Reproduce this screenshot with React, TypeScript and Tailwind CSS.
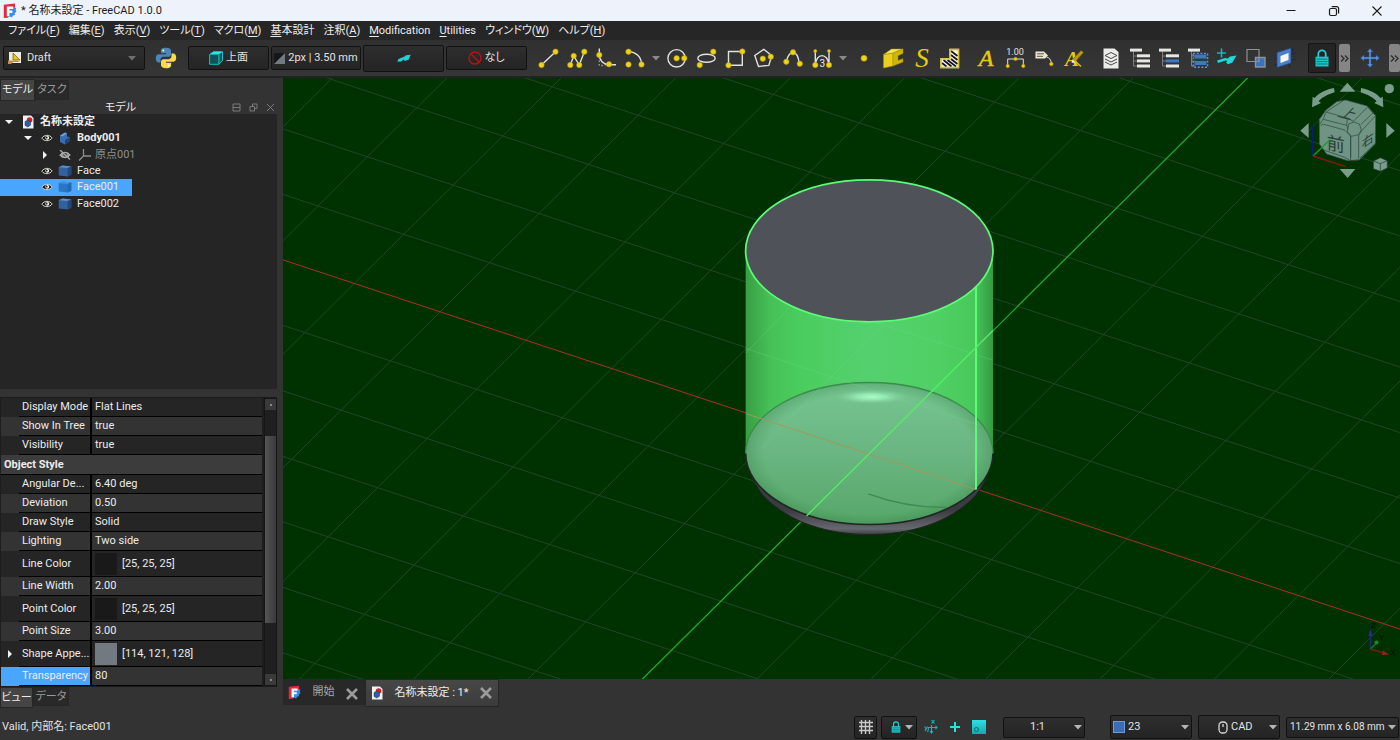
import React from 'react';

const UI = "font-[Roboto,'Noto_Sans_CJK_JP',sans-serif]";
const KANA = "[font-feature-settings:'palt']";

/* ---------- shared drawing parts ---------- */

type Pt = [number, number];

function Dots({ at, r = 2.7 }: { at: Pt[]; r?: number }) {
  return (
    <>
      {at.map(([x, y]) => (
        <circle key={`${x}-${y}`} cx={x} cy={y} r={r} fill="#edd41c" stroke="#b39b06" strokeWidth=".6" />
      ))}
    </>
  );
}

function Glyph({ children }: { children: React.ReactNode }) {
  return (
    <svg viewBox="0 0 24 24" className="size-6 shrink-0 overflow-visible" fill="none" stroke="#dfe2e0" strokeWidth="1.4" aria-hidden="true">
      {children}
    </svg>
  );
}

function Caret({ className = 'text-[#8a8a8a]' }: { className?: string }) {
  return (
    <svg viewBox="0 0 8 5" className={`h-[5px] w-2 shrink-0 ${className}`} aria-hidden="true">
      <path d="M0 0h8L4 4.5z" fill="currentColor" />
    </svg>
  );
}

function FreeCadLogo({ className }: { className: string }) {
  return (
    <svg viewBox="0 0 14 16" className={`${className} shrink-0`} aria-hidden="true">
      <path d="M.8 1.8 12 .6v3.6L10 6 5 14.8.8 15z" fill="#e3293c" />
      <path d="m6.5 5 5-.8 1.8.8-.7 2 .9 1.8-1.8 1.2.2 2-2 .4-1 2-2-.8-2 .6z" fill="#3c8be0" />
      <path d="M3.8 3.6h6.4V6H6.4v1.6h3v2.3h-3v3.3H3.8z" fill="#fff" />
    </svg>
  );
}

function DocIcon() {
  return (
    <svg viewBox="0 0 12 14" className="h-[14px] w-3 shrink-0" aria-hidden="true">
      <path d="M1 .5h8l2.5 2.5v10.5H1z" fill="#f2f2f0" />
      <circle cx="7.6" cy="5" r="2.8" fill="#d92020" />
      <path d="m3 6.5 2.5-1.3 3 1.2v3.8L5.8 12 3 10.4z" fill="#2f5fa6" stroke="#14305f" strokeWidth=".5" />
    </svg>
  );
}

function EyeIcon({ dim }: { dim?: boolean }) {
  return (
    <svg viewBox="0 0 12 10" className="h-[10px] w-3 shrink-0" aria-hidden="true">
      <path d="M.8 5.2C3 1.6 8.6 1.2 11.2 5 8.6 8.4 3.2 8.6.8 5.2z" fill={dim ? '#9a9a9a' : '#1c1c1c'} stroke={dim ? '#bdbdbd' : '#d6d6ce'} strokeWidth="1" />
      <circle cx="6.2" cy="4.8" r="2" fill={dim ? '#555' : '#f2f2ee'} />
      <circle cx="5.6" cy="4.6" r="1" fill="#222" />
      {dim && <path d="m1 0 10 9.5" stroke="#a5a5a5" strokeWidth="1.4" />}
    </svg>
  );
}

function CubeIcon({ selected }: { selected?: boolean }) {
  return (
    <svg viewBox="0 0 14 12" className="h-3 w-[14px] shrink-0" aria-hidden="true">
      <path d="M.7 2.3 4.5.6l8.8 1v8.2l-3.6 1.7-9-.9z" fill={selected ? '#2b76c4' : '#33609f'} />
      <path d="M.7 2.3 4.5.6l8.8 1-3.6 1.5z" fill={selected ? '#3f93e6' : '#5c8fd0'} />
      <path d="m9.7 3.1 3.6-1.5v8.2l-3.6 1.7z" fill={selected ? '#2368b0' : '#24477a'} />
    </svg>
  );
}

/* ---------- title and menu ---------- */

function TitleBar() {
  return (
    <header className="flex h-[21px] shrink-0 items-center bg-[#eef3fb] pl-[3px] text-[#1b1b1b]">
      <FreeCadLogo className="h-4 w-[14px]" />
      <h1 className={`${UI} ml-1 flex-1 text-[11px] leading-4`}>* 名称未設定 - FreeCAD 1.0.0</h1>
      <div className="flex items-center gap-[30px] pr-[17px]">
        <button type="button" aria-label="Minimize" className="flex size-[13px] items-center justify-center">
          <svg viewBox="0 0 12 12" className="size-3" stroke="currentColor"><path d="M1.5 5.5h9" /></svg>
        </button>
        <button type="button" aria-label="Restore" className="flex size-[13px] items-center justify-center">
          <svg viewBox="0 0 12 12" className="size-3" fill="none" stroke="currentColor" strokeWidth="1.2">
            <rect x="1.5" y="3.5" width="7" height="7" rx="1.5" />
            <path d="M3.7 1.6h4.9a2 2 0 0 1 2 2v4.8" />
          </svg>
        </button>
        <button type="button" aria-label="Close" className="flex size-[13px] items-center justify-center">
          <svg viewBox="0 0 12 12" className="size-3" stroke="currentColor" strokeWidth="1.1"><path d="m1.5 1.5 9 9m0-9-9 9" /></svg>
        </button>
      </div>
    </header>
  );
}

const MENUS: { pre: string; key: string; post: string }[] = [
  { pre: 'ファイル(', key: 'F', post: ')' },
  { pre: '編集(', key: 'E', post: ')' },
  { pre: '表示(', key: 'V', post: ')' },
  { pre: 'ツール(', key: 'T', post: ')' },
  { pre: 'マクロ(', key: 'M', post: ')' },
  { pre: '', key: '基', post: '本設計' },
  { pre: '注釈(', key: 'A', post: ')' },
  { pre: '', key: 'M', post: 'odification' },
  { pre: '', key: 'U', post: 'tilities' },
  { pre: 'ウィンドウ(', key: 'W', post: ')' },
  { pre: 'ヘルプ(', key: 'H', post: ')' },
];

function MenuBar() {
  return (
    <nav className={`${UI} ${KANA} flex h-[19px] shrink-0 items-center gap-[9px] bg-[#262626] pl-2 text-[11px] leading-4 text-[#ececec]`}>
      {MENUS.map((m) => (
        <button key={m.pre + m.key + m.post} type="button" className="whitespace-nowrap">
          {m.pre}<span className="underline underline-offset-2">{m.key}</span>{m.post}
        </button>
      ))}
    </nav>
  );
}

/* ---------- toolbar ---------- */

function Tool({ name, children }: { name: string; children: React.ReactNode }) {
  return (
    <button type="button" aria-label={name} className="flex h-7 w-[29px] shrink-0 items-center justify-center">
      <Glyph>{children}</Glyph>
    </button>
  );
}

function More({ name }: { name: string }) {
  return (
    <button type="button" aria-label={name} className="flex h-7 w-[13px] shrink-0 items-center justify-center">
      <Caret />
    </button>
  );
}

function Extend({ name }: { name: string }) {
  return (
    <button type="button" aria-label={name} className="flex h-7 w-[11px] shrink-0 items-center justify-center rounded-[2px] bg-[#858585]">
      <svg viewBox="0 0 9 7" className="h-[7px] w-[9px]" fill="none" stroke="#2c2c2c" strokeWidth="1.3"><path d="m1 .5 3 3-3 3m4-6 3 3-3 3" /></svg>
    </button>
  );
}

const FIELD = 'flex items-center rounded-[2px] border border-[#111] bg-linear-to-b from-[#2e2e2e] to-[#242424] text-[#e2e2e2]';

function Padlock({ className }: { className: string }) {
  return (
    <svg viewBox="0 0 14 18" className={`${className} shrink-0`} aria-hidden="true">
      <path d="M3.3 8V5a3.7 3.7 0 0 1 7.4 0v3" fill="none" stroke="#20d3d8" strokeWidth="1.7" />
      <path d="M.5 7.6h13v9.9H.5z" fill="#1fc4c9" />
      <path d="M1.5 10.2h11M1.5 12.6h11M1.5 15h11" stroke="#0b7377" strokeWidth=".9" />
    </svg>
  );
}

function ListBars({ accent }: { accent: 'none' | 'mid' | 'select' }) {
  return (
    <>
      <path d="M5.5 5v15M5.5 10h4m-4 5h4m-4 5h4" stroke="#8e918e" strokeWidth=".8" />
      <path d="M2 2.6h12v3H2z" fill="#e6e8e4" stroke="none" />
      {accent !== 'select' && (
        <g stroke="none">
          <path d="M9 8.3h13v3H9z" fill="#e6e8e4" />
          <path d="M9 13.4h13v3H9z" fill={accent === 'mid' ? '#3f77c4' : '#e6e8e4'} />
          <path d="M9 18.5h13v3H9z" fill="#e6e8e4" />
        </g>
      )}
      {accent === 'select' && (
        <g>
          <path d="M8.5 8.5h12v4h-12zm0 6.500h12v4h-12z" fill="#3f77c4" stroke="none" />
          <path d="M7.2 7.4h14.4v13.8H7.2z" stroke="#5a94e2" strokeDasharray="2 1.6" />
          <path d="M7 13.7h15" stroke="#1b3d70" />
        </g>
      )}
    </>
  );
}

function ToolBar() {
  return (
    <div className={`${UI} flex h-[38px] shrink-0 items-center border-b-2 border-[#222] bg-linear-to-b from-[#303030] to-[#363636] pl-[3px] text-[11px] leading-4`}>
      <div className={`${FIELD} h-6 w-[142px] shrink-0 pr-2 pl-1`}>
        <svg viewBox="0 0 14 14" className="size-[14px] shrink-0" aria-hidden="true">
          <path d="M1 1h12v11H1z" fill="#eeece4" />
          <path d="M5 2v7h7z" fill="#e8c70f" stroke="#6d5a00" strokeWidth=".7" />
          <path d="M0 9.5h9l3 1.6H5L3 13H0z" fill="#c58c42" />
        </svg>
        <select aria-label="Workbench" className="ml-[5px] flex-1 appearance-none bg-transparent outline-none"><option>Draft</option></select>
        <Caret className="text-[#6f6f6f]" />
      </div>
      <button type="button" aria-label="Python" className="mr-[10px] ml-[9px] flex h-6 w-6 shrink-0 items-center justify-center">
        <svg viewBox="0 0 22 22" className="size-[22px]" aria-hidden="true">
          <path d="M10.8.8c-4 0-4.900 1.500-4.900 3.200v2.300h5.200v.9H3.900C2.100 7.200.8 8.600.8 11.200s1.100 4.200 2.700 4.200h2v-2.700c0-1.700 1.400-2.900 3-2.900h5c1.400 0 2.500-1.200 2.500-2.600V4c0-2-1.700-3.200-5.200-3.200z" fill="#4a86b8" />
          <path d="M11.2 21.200c4 0 4.900-1.500 4.900-3.200v-2.300h-5.200v-.9h7.200c1.800 0 3.100-1.400 3.100-4s-1.100-4.200-2.700-4.200h-2v2.700c0 1.700-1.400 2.900-3 2.900h-5C7.100 12.200 6 13.400 6 14.800V18c0 2 1.700 3.200 5.200 3.200z" fill="#ffd94a" />
          <circle cx="8.3" cy="3.5" r="1" fill="#fff" />
          <circle cx="13.7" cy="18.5" r="1" fill="#fff" />
        </svg>
      </button>
      <div className="flex shrink-0 items-center gap-[2px]">
        <button type="button" className={`${FIELD} h-6 w-[81px] justify-center gap-[3px]`}>
          <svg viewBox="0 0 14 14" className="size-[14px]" aria-hidden="true">
            <path d="M.6 3.5 4.5.7h9v8.8l-3.6 3.8H.6z" fill="#0d5558" stroke="#22c9cf" strokeWidth=".9" />
            <path d="M.6 3.5 4.5.7h9L9.9 3.5z" fill="#2fe3e8" />
            <path d="M9.9 3.5v9.8" stroke="#22c9cf" />
          </svg>
          上面
        </button>
        <button type="button" className={`${FIELD} h-6 w-[90px] justify-center gap-[3px] whitespace-nowrap`}>
          <svg viewBox="0 0 11 11" className="size-[11px] shrink-0" aria-hidden="true"><path d="M0 0h11v11H0z" fill="#15171a" /><path d="M11 0v11H0z" fill="#727980" /></svg>
          2px | 3.50 mm
        </button>
        <button type="button" aria-label="Construction mode" className={`${FIELD} h-[27px] w-[81px] justify-center`}>
          <svg viewBox="0 0 14 9" className="h-[9px] w-[14px]" aria-hidden="true"><path d="M.3 7.500 1.500 5l6-2.500L9 1.300l4.800-.5-2.300 5L7.500 7 7 5.500 3.500 7.800z" fill="#22cfd4" /></svg>
        </button>
        <button type="button" className={`${FIELD} ${KANA} h-6 w-[81px] justify-center gap-[2px]`}>
          <svg viewBox="0 0 14 14" className="size-[14px]" fill="none" stroke="#c01010" strokeWidth="1.3" aria-hidden="true"><circle cx="7" cy="7" r="6" /><path d="m2.8 2.8 8.4 8.4" /></svg>
          なし
        </button>
      </div>

      <div className="ml-[6px] flex shrink-0 items-center">
        <Tool name="Line"><path d="M5.5 19 19.5 5.7" /><Dots at={[[5.5, 19], [19.5, 5.7]]} /></Tool>
        <Tool name="Polyline"><path d="m5.3 19 3.4-9 5.600 9 5-13.300" /><Dots at={[[5.3, 19], [8.7, 10], [14.3, 19], [19.3, 5.7]]} /></Tool>
        <Tool name="Fillet"><path d="M5.3 2.500V9c0 5 4 9.500 9.700 9.800h7" /><path d="M5.3 14.500v5h6" stroke="#9a9d9a" strokeDasharray="1.5 2" /><Dots at={[[5.3, 9], [15, 18.3]]} /></Tool>
        <Tool name="Arc"><path d="M5.5 5.700c7.500 0 13 5.300 13 12.800" /><Dots at={[[5.5, 5.7], [5.5, 18.5], [18.5, 18.5]]} /></Tool>
        <More name="Arc tools" />
        <Tool name="Circle"><circle cx="11.6" cy="12.3" r="8.7" /><Dots at={[[11.6, 12.3], [19.3, 12.3]]} /></Tool>
        <Tool name="Ellipse"><ellipse cx="12.5" cy="12.3" rx="8.7" ry="4" /><Dots at={[[5.7, 19], [19.3, 5.7]]} /></Tool>
        <Tool name="Rectangle"><path d="M5.5 5.500h13.800v13.800H5.500z" /><Dots at={[[5.5, 19.3], [19.3, 5.5]]} /></Tool>
        <Tool name="Polygon"><path d="m11.800 3.300 8 6.400-3 9.700-10.300 1L2.800 9.500z" /><Dots at={[[10.8, 12.7], [18.8, 10.7]]} /></Tool>
        <Tool name="B-spline"><path d="M5.300 15.700C6.500 10.500 8.500 6.500 12 6.500s5.500 5 6.300 11" /><Dots at={[[5.3, 15.7], [12, 6.3], [18.8, 17.7]]} /></Tool>
        <Tool name="Bézier curve">
          <path d="M5.300 5v14m13.700 0V5M5.300 19C6 6.500 18 6.500 19 19" />
          <text x="12.3" y="21" fontSize="10" textAnchor="middle" fill="#e8e8e8" stroke="none">3</text>
          <Dots at={[[5.3, 19], [19, 19]]} /><Dots at={[[5.3, 5], [19, 5]]} r={1.6} />
        </Tool>
        <More name="Bézier tools" />
        <Tool name="Point"><Dots at={[[12, 12.3]]} r={3} /></Tool>
        <Tool name="Facebinder">
          <g stroke="#a38e05" strokeWidth=".5">
            <path d="M2.500 8.500 12 7v13l-9.500 2z" fill="#ead01a" />
            <path d="m2.500 8.500 8-5.500H22l-10 4z" fill="#f7e65c" />
            <path d="m12 7 10-4v4.500l-5 2.300v4.700l5-1.800V16l-10 4z" fill="#cfb40c" />
          </g>
        </Tool>
        <Tool name="ShapeString"><text x="12" y="21" fontSize="27" textAnchor="middle" fill="#e6cb14" stroke="none" className="font-['Liberation_Serif',serif] italic">S</text></Tool>
        <Tool name="Hatch">
          <path d="M11 3.500h8.500v18H2v-8.700h9z" fill="#f4f4f4" />
          <path d="m12 5 6.500 5M12 9l6.500 5M12 13l6.500 5M8.500 14l8.500 6.500M4.500 14l8 6.500M3 17l4.500 3.500" stroke="#161616" strokeWidth="1.7" />
          <path d="M11 3.500h8.500v18H2v-8.700h9z" stroke="#dcc216" strokeWidth="1.3" />
        </Tool>
      </div>

      <div className="ml-[6px] flex shrink-0 items-center">
        <Tool name="Text"><text x="12" y="20" fontSize="24" textAnchor="middle" fill="#e6cb14" stroke="#e6cb14" strokeWidth=".5" className="font-['Liberation_Serif',serif] italic">A</text></Tool>
        <Tool name="Dimension">
          <text x="12" y="9" fontSize="9" textAnchor="middle" fill="#e0e0e0" stroke="none">1.00</text>
          <path d="M4.700 20v-7h15.600v7" strokeWidth="1" /><Dots at={[[4.7, 20], [20.3, 20], [12.5, 12.9]]} r={1.7} />
        </Tool>
        <Tool name="Label">
          <path d="M3.500 5.500H12l4 4-3 3H3.500z" fill="#ece6d2" stroke="none" /><path d="M5 7.800h7M5 10.300h6" stroke="#4a463a" strokeWidth=".9" />
          <path d="M14.500 11c3 .5 4.500 3 4.800 6" strokeWidth="1" /><Dots at={[[19.3, 18]]} r={1.8} />
        </Tool>
        <Tool name="Annotation styles">
          <text x="11" y="20" fontSize="21" fontWeight="700" textAnchor="middle" fill="#e6cb14" stroke="none" className="font-['Liberation_Serif',serif] italic">A</text>
          <path d="m11 14 9-9.500 2.500 2L14 16" fill="#b99a10" stroke="#6e5b05" strokeWidth=".6" /><path d="m10.500 17 1-3.500 3 2.700z" fill="#f3f3f3" stroke="none" /><path d="m14 15 6 5.500" stroke="#d8be12" strokeWidth="1.6" />
        </Tool>
      </div>

      <div className="ml-[9px] flex shrink-0 items-center">
        <Tool name="Layer">
          <path d="M4.500 2.500h11L19.500 6v16.500h-15z" fill="#ecece8" stroke="none" />
          <path d="m6 9.500 6-3 6 3-6 3zM6 13l6 3 6-3M6 16l6 3 6-3" stroke="#474a47" strokeWidth="1" />
        </Tool>
        <Tool name="Layer manager"><ListBars accent="none" /></Tool>
        <Tool name="Add to layer"><ListBars accent="mid" /></Tool>
        <Tool name="Select group"><ListBars accent="select" /></Tool>
        <Tool name="Add to construction group">
          <path d="M2 7h9M6.500 2.500v9" stroke="#1fb3b8" strokeWidth="1.6" />
          <path d="m2 14.500 8-2.500 3 .5 2-2 6.500-1-4 7-4.500 1.800-2-1.800 1.500-1.500-2-.5-7.500 2.500z" fill="#26d4d9" stroke="none" />
        </Tool>
        <Tool name="Toggle display mode">
          <path d="M11.500 11.500h9.500v9.500h-9.500z" fill="#3a72be" stroke="#8e9296" /><path d="M3 3.500h12v12H3z" stroke="#8e9296" strokeWidth="1.2" />
        </Tool>
        <Tool name="Working plane proxy">
          <path d="M1 13l22-6M1 19l22-6M7 22l3-20m6 20 4-20" stroke="#16263f" strokeWidth=".8" />
          <path d="M4 6.500 18 2v15L4 21.500z" fill="#4b80c8" stroke="#23487f" strokeWidth=".8" />
          <path d="m7.500 10 8-3v7l-8 3z" fill="#f3f5f7" stroke="none" />
        </Tool>
      </div>

      <div className="ml-[9px] flex flex-1 items-center">
        <button type="button" aria-label="Snap lock" aria-pressed="true" className="flex h-[30px] w-7 shrink-0 items-center justify-center rounded-[2px] border border-[#141414] bg-[#242424]">
          <Padlock className="h-[18px] w-[14px]" />
        </button>
        <div className="ml-[3px] flex"><Extend name="More snap tools" /></div>
        <button type="button" aria-label="Move" className="mx-[7px] flex h-7 w-[25px] shrink-0 items-center justify-center">
          <svg viewBox="0 0 20 20" className="size-5" aria-hidden="true">
            <path d="m10 .5 3 3.500h-2v5h5V7l3.500 3-3.500 3v-2h-5v5h2l-3 3.500L7 16h2v-5H4v2L.5 10 4 7v2h5V4H7z" fill="#5a8fdc" stroke="#2a4f8c" strokeWidth=".5" />
          </svg>
        </button>
        <div className="ml-auto flex pr-[3px]"><Extend name="More modify tools" /></div>
      </div>
    </div>
  );
}

/* ---------- model panel ---------- */

function Arrow({ open }: { open: boolean }) {
  return (
    <svg viewBox="0 0 8 8" className="size-2 shrink-0" aria-hidden="true">
      <path d={open ? 'M0 2h8L4 6z' : 'M2 0v8l4-4z'} fill="#f2f2f2" />
    </svg>
  );
}

function ModelTree() {
  const row = 'flex items-center whitespace-nowrap';
  return (
    <ul className="grid h-[98px] auto-rows-fr">
      <li className={`${row} pl-[5px] font-bold`}><Arrow open /><span className="mr-[6px] ml-[9px] flex"><DocIcon /></span>名称未設定</li>
      <li className={`${row} pl-6 font-bold`}>
        <Arrow open /><span className="mr-[6px] ml-[9px] flex"><EyeIcon /></span>
        <svg viewBox="0 0 12 13" className="mr-[6px] h-[13px] w-3 shrink-0" aria-hidden="true">
          <path d="m1 3.500 5-3 2 1v3l3 .5v4l-5 3.500L1 10z" fill="#3a6cb0" /><path d="m6 12.500 5-3.500V5L6 8z" fill="#20447c" /><path d="m1 3.500 5-3 2 1-4.500 3z" fill="#6d9ddb" />
        </svg>
        Body001
      </li>
      <li className={`${row} pl-[41px] text-[#8d8d8d]`}>
        <Arrow open={false} /><span className="mr-[7px] ml-[10px] flex"><EyeIcon dim /></span>
        <svg viewBox="0 0 13 12" className="mr-1 h-3 w-[13px] shrink-0" fill="none" stroke="#8d8d8d" strokeWidth="1.3" aria-hidden="true"><path d="M5.500 0v7L1 11.500M5.500 7H13" /></svg>
        原点001
      </li>
      {['Face', 'Face001', 'Face002'].map((name) => (
        <li key={name} className={name === 'Face001' ? `${row} w-[132px] bg-[#4aa5ff] pl-[41px]` : `${row} pl-[41px]`}>
          <EyeIcon /><span className="mr-[5px] ml-[5px] flex"><CubeIcon selected={name === 'Face001'} /></span>{name}
        </li>
      ))}
    </ul>
  );
}

type Prop = { name: string; value: string; swatch?: 'dark' | 'grey'; group?: boolean; expand?: boolean; current?: boolean };

const PROPS: Prop[] = [
  { name: 'Display Mode', value: 'Flat Lines' },
  { name: 'Show In Tree', value: 'true' },
  { name: 'Visibility', value: 'true' },
  { name: 'Object Style', value: '', group: true },
  { name: 'Angular De...', value: '6.40 deg' },
  { name: 'Deviation', value: '0.50' },
  { name: 'Draw Style', value: 'Solid' },
  { name: 'Lighting', value: 'Two side' },
  { name: 'Line Color', value: '[25, 25, 25]', swatch: 'dark' },
  { name: 'Line Width', value: '2.00' },
  { name: 'Point Color', value: '[25, 25, 25]', swatch: 'dark' },
  { name: 'Point Size', value: '3.00' },
  { name: 'Shape Appe...', value: '[114, 121, 128]', swatch: 'grey', expand: true },
  { name: 'Transparency', value: '80', current: true },
];

function PropertyTable() {
  return (
    <table className="w-full table-fixed border-separate border-spacing-0 text-left">
      <colgroup><col className="w-[18px]" /><col className="w-[73px]" /><col /></colgroup>
      <tbody>
        {PROPS.map((p, i) => {
          if (p.group) {
            return (
              <tr key={p.name} className="h-5 bg-[#3c3c3c]">
                <th colSpan={3} className="border-b border-black p-0 pl-[3px] font-bold">{p.name}</th>
              </tr>
            );
          }
          const odd = i % 2 === 1;
          return (
            <tr key={p.name} className={`${p.swatch ? 'h-[26px]' : 'h-[19px]'} ${odd ? 'bg-[#333]' : 'bg-[#252525]'}`}>
              <td className={`p-0 pl-[5px] ${p.current ? 'bg-[#4aa5ff]' : ''}`}>{p.expand && <Arrow open={false} />}</td>
              <th className={`border-r-2 border-b border-black p-0 pl-[3px] font-normal whitespace-nowrap ${p.current ? 'bg-[#4aa5ff]' : ''}`}>{p.name}</th>
              <td className="border-b border-black p-0 pl-[3px]">
                <span className="flex items-center gap-[5px]">
                  {p.swatch && <span className={`block size-[22px] ${p.swatch === 'dark' ? 'bg-[#191919]' : 'bg-[#727980]'}`} />}
                  {p.value}
                </span>
              </td>
            </tr>
          );
        })}
      </tbody>
    </table>
  );
}

const TAB = 'flex items-center justify-center border border-[#262626]';

function SidePanel() {
  return (
    <aside className={`${UI} flex w-[283px] shrink-0 flex-col bg-[#333] text-[11px] leading-4 text-[#ececec]`}>
      <div role="tablist" className={`${KANA} flex shrink-0 items-start pt-px`}>
        <button type="button" role="tab" aria-selected="true" className={`${TAB} h-[22px] w-[35px] bg-[#454545]`}>モデル</button>
        <button type="button" role="tab" aria-selected="false" className={`${TAB} mt-px h-[20px] w-[34px] bg-[#292929] text-[#9a9a9a]`}>タスク</button>
      </div>
      <div className={`${KANA} flex h-[13px] shrink-0 items-center pr-2 pl-[105px]`}>
        <h2 className="flex-1">モデル</h2>
        <div className="flex gap-2 text-[#7b7b7b]">
          {[
            { n: 'Collapse', d: 'M1 1h7v7H1zM1 4.5h7' },
            { n: 'Float', d: 'M1 3.5h4.5V8H1zM3.500 3V1H8v4.500H6' },
            { n: 'Close panel', d: 'm1 1 7 7m0-7L1 8' },
          ].map((b) => (
            <button key={b.n} type="button" aria-label={b.n}>
              <svg viewBox="0 0 9 9" className="size-[9px]" fill="none" stroke="currentColor"><path d={b.d} /></svg>
            </button>
          ))}
        </div>
      </div>
      <div className="mr-[6px] min-h-0 flex-1 bg-[#252525]">
        <ModelTree />
      </div>
      <div className="mt-2 mr-[6px] flex shrink-0 border-t border-b border-[#1c1c1c] bg-[#1d1d1d] pl-px">
        <div className="min-w-0 flex-1"><PropertyTable /></div>
        <div className="ml-[2px] flex w-[13px] flex-col border border-[#151515] bg-[#1f1f1f]">
          <button type="button" aria-label="Scroll up" className="flex h-[11px] items-center justify-center bg-[#3a3a3a]"><span className="size-[2px] bg-[#888]" /></button>
          <div className="mt-[26px] h-[187px] bg-linear-to-r from-[#555] to-[#3a3a3a]" />
          <button type="button" aria-label="Scroll down" className="mt-auto flex h-[11px] items-center justify-center bg-[#3a3a3a]"><span className="size-[2px] bg-[#888]" /></button>
        </div>
      </div>
      <div role="tablist" className={`${KANA} flex shrink-0 items-start pb-px`}>
        <button type="button" role="tab" aria-selected="true" className={`${TAB} h-[21px] w-[33px] bg-[#454545]`}>ビュー</button>
        <button type="button" role="tab" aria-selected="false" className={`${TAB} h-[19px] w-[36px] bg-[#292929] text-[#9a9a9a]`}>データ</button>
      </div>
    </aside>
  );
}

/* ---------- 3D view ---------- */

const STEPS = Array.from({ length: 23 }, (_, i) => i - 11).filter((k) => k !== 0);

function Scene() {
  return (
    <svg viewBox="283 78 1117 602" preserveAspectRatio="xMidYMid slice" className="absolute inset-0 size-full" role="img" aria-label="3D view">
      <defs>
        <linearGradient id="wall">
          <stop offset="0" stopColor="#389e44" /><stop offset=".1" stopColor="#46c157" /><stop offset=".22" stopColor="#4acd5e" />
          <stop offset=".5" stopColor="#55d06f" /><stop offset=".78" stopColor="#4fd064" /><stop offset=".92" stopColor="#49c95b" /><stop offset="1" stopColor="#359a42" />
        </linearGradient>
        <linearGradient id="dome" x2="0" y2="1">
          <stop offset="0" stopColor="#76c692" /><stop offset=".5" stopColor="#6ab581" /><stop offset="1" stopColor="#56a769" />
        </linearGradient>
        <radialGradient id="rim"><stop offset=".85" stopColor="#2f7a3d" stopOpacity="0" /><stop offset="1" stopColor="#2f7a3d" stopOpacity=".3" /></radialGradient>
        <linearGradient id="base" x2="0" y2="1"><stop offset=".7" stopColor="#3b3c42" /><stop offset=".93" stopColor="#66686f" /><stop offset="1" stopColor="#3c3d42" /></linearGradient>
        <radialGradient id="shine"><stop offset="0" stopColor="#a9ffc6" /><stop offset=".4" stopColor="#9bf0b8" stopOpacity=".8" /><stop offset="1" stopColor="#7fd09b" stopOpacity="0" /></radialGradient>
      </defs>
      <path d="M283 78h1117v602H283z" fill="#003100" />
      <g stroke="#21452a" strokeWidth="1">
        {STEPS.map((k) => <line key={`a${k}`} x1="283" y1={260.4 + 65.5 * k} x2="1400" y2={629.6 + 65.5 * k} />)}
        {STEPS.map((k) => <line key={`b${k}`} x1={1248 + 114.4 * k} y1="78" x2={642 + 114.4 * k} y2="680" />)}
      </g>
      <path d="M1248 78 642 680" stroke="#25b02c" strokeWidth="1.2" />
      <path d="m283 260.4 1117 369.2" stroke="#a93226" />
      <g transform="translate(730 170) scale(.33333)">
        <path d="M47 852c0 30 12 72 52 126 80 84 200 117 319 117s240-33 319-117c40-54 52-96 52-126z" fill="url(#base)" stroke="#222" strokeWidth="3" />
        <path d="M47 244v608a371 213 0 0 0 742 0V244z" fill="url(#wall)" />
        <ellipse cx="418" cy="852" rx="371" ry="213" fill="url(#dome)" />
        <ellipse cx="418" cy="852" rx="371" ry="213" fill="url(#rim)" />
        <ellipse cx="425" cy="682" rx="112" ry="22" fill="url(#shine)" />
        <path d="M47 852a371 213 0 0 1 742 0" fill="none" stroke="#3c8b4d" strokeWidth="4" />
        <path d="M47 852a371 213 0 0 0 742 0" fill="none" stroke="#1f2722" strokeWidth="5" />
        <g fill="none" strokeWidth="2.5">
          <path d="m47 550 45-45 80-85M92 840 300 625l170-165M47 537l700 230M440 460l349 112" stroke="#6cd883" strokeOpacity=".4" />
          <path d="m50 733 688 227" stroke="#a1995a" strokeWidth="3" />
          <path d="M415 973c70 26 150 42 235 41" stroke="#3f8a52" strokeWidth="4.5" />
        </g>
        <path d="M738 348v612" stroke="#5dfb78" strokeWidth="6" />
      </g>
      <path d="M993 331 806.5 516.5" stroke="#55ee66" strokeWidth="1.3" />
      <ellipse cx="869.3" cy="251.3" rx="123.7" ry="71" fill="#4f5359" stroke="#5dfb78" strokeWidth="1.7" />
    </svg>
  );
}

function NavCube() {
  return (
    <svg viewBox="660 234 300 336" className="absolute top-0 right-0 h-28 w-[100px]" role="img" aria-label="Navigation cube">
      <g fill="#7a9c8c">
        <path d="m779 275 23-27 24 27zM779 507h47l-23 27zM686 369v45l-25-22zM919 369v45l25-22z" />
        <circle cx="928" cy="266" r="14" />
        <path d="M762 264c-30 6-48 18-58 30l-6-4-2 32 27-13-7-5c8-10 24-20 48-27zM843 264c28 6 50 18 58 30l7-4 2 32-27-13 7-5c-10-10-24-20-48-27z" />
        <path d="m880 483 21-10 21 9v22l-21 10-21-8z" stroke="#20382a" strokeWidth="2" />
        <path d="m880 483 21 8 21-9M901 491v22" fill="none" stroke="#20382a" strokeWidth="2" />
      </g>
      <path d="M698 377v90" stroke="#0a1a80" strokeWidth="4" />
      <path d="m770 305 27-5 65 18 25 29-1 85-48 48-35 2-63-20-22-30v-74l20-28z" fill="#6f9484" stroke="#3a4f45" strokeWidth="2" />
      <g fill="none" stroke="#2b4438" strokeWidth="2">
        <path d="m738 336 64 18 18 10 42-42M738 336l-8 20-10 16M730 358l70 18 4 12M728 372l66 18 18 18v64M722 378l6-6M802 354l-2 22M720 446l74 26 18 10 24-2" />
        <path d="m806 372 16-6 16 6 6 18-8 14-22 5-12-14z" />
        <path d="m842 374 40-38M862 320l22 24M845 392l41-44M836 406v70M836 406l9-14M812 408v72M886 430l-46 44M738 336l52-34" />
      </g>
      <g fill="#2b3f36" className="font-['Noto_Sans_CJK_JP',sans-serif]">
        <text transform="translate(792 354) rotate(14) skewX(-30)" fontSize="44" textAnchor="middle">上</text>
        <text transform="translate(767 452) skewY(12)" fontSize="54" textAnchor="middle">前</text>
        <text transform="translate(863 434) skewY(-34)" fontSize="36" textAnchor="middle">右</text>
      </g>
      <path d="m699 468 50-48" stroke="#1f9a2a" strokeWidth="4" />
      <path d="m699 468 98 32" stroke="#8e1512" strokeWidth="4" />
    </svg>
  );
}

function AxisCross() {
  return (
    <svg viewBox="1360 618 40 44" className="absolute right-0 bottom-[18px] h-11 w-10" role="img" aria-label="Axis cross">
      <path d="M1370.5 650v-14" stroke="#23237e" strokeWidth="1.5" /><path d="m1368.3 637 2.2-7 2.2 7z" fill="#2a2a9a" />
      <path d="m1370.5 650 5-5" stroke="#1c7a1c" strokeWidth="1.5" /><circle cx="1376.5" cy="643.5" r="2" fill="#1f8a1f" />
      <path d="m1370.5 650 13 4" stroke="#7a1a1a" strokeWidth="1.5" /><path d="m1383 651.5 6 4-7 .5z" fill="#9a2020" />
      <g fontSize="8" fill="#000500" className="font-['Liberation_Sans',sans-serif]">
        <text x="1371" y="629">Z</text><text x="1379" y="641">Y</text><text x="1390" y="656">X</text>
      </g>
    </svg>
  );
}

function CloseX() {
  return <svg viewBox="0 0 12 12" className="size-3" stroke="#9b9b9b" strokeWidth="2.6" aria-hidden="true"><path d="m1 1 10 10M11 1 1 11" /></svg>;
}

function Workspace() {
  return (
    <main className="flex min-w-0 flex-1 flex-col bg-[#333]">
      <div className="relative min-h-0 flex-1 overflow-hidden"><Scene /><NavCube /><AxisCross /></div>
      <div role="tablist" className={`${UI} flex h-[30px] shrink-0 items-start text-[11px] leading-4`}>
        <div className="flex h-[26px] w-[82px] items-center bg-[#282828] pr-[7px] pl-[5px] text-[#a8a8a8]">
          <FreeCadLogo className="h-[15px] w-[13px]" />
          <button type="button" role="tab" aria-selected="false" className="flex-1">開始</button>
          <button type="button" aria-label="Close 開始" className="mt-1"><CloseX /></button>
        </div>
        <div className="flex h-7 w-[134px] items-center border border-[#262626] bg-linear-to-b from-[#474747] to-[#3c3c3c] pr-[6px] pl-[5px] text-[#ededed]">
          <DocIcon />
          <button type="button" role="tab" aria-selected="true" className="flex-1">名称未設定 : 1*</button>
          <button type="button" aria-label="Close 名称未設定"><CloseX /></button>
        </div>
      </div>
    </main>
  );
}

/* ---------- status bar ---------- */

const CHOICE = 'min-w-0 flex-1 appearance-none bg-transparent outline-none';

function StatusBar() {
  return (
    <footer className={`${UI} flex shrink-0 items-center bg-[#333] pt-[6px] pr-px pb-px text-[11px] leading-4 text-[#e2e2e2]`}>
      <p className="flex-1 truncate pl-[2px]">Valid, 内部名: Face001</p>
      <button type="button" aria-label="Grid" className={`${FIELD} size-[23px] justify-center`}>
        <svg viewBox="0 0 14 14" className="size-[14px]" stroke="#c9c9c9"><path d="M0 2.500h14M0 6.500h14M0 10.500h14M2.500 0v14M6.500 0v14M10.500 0v14" strokeWidth="1.4" /></svg>
      </button>
      <button type="button" aria-label="Snap" className={`${FIELD} ml-1 h-[23px] w-9 justify-end gap-1 pr-[3px]`}>
        <Padlock className="h-3 w-[10px]" /><Caret className="text-[#b5b5b5]" />
      </button>
      <div className="mx-[7px] flex items-center gap-3">
        <button type="button" aria-label="Ortho">
          <svg viewBox="0 0 14 14" className="size-[14px]" fill="none" stroke="#1fb3b8" strokeWidth="1.1"><path d="M7.5 5v7.500M4 7.500h9M7.500 0l3 3.500m0-3.500-3 3.500M.5 6.500 2 8.500m1.500-2L1 11M6 11l1.500 2L9 11M4.500 7.500c-.5 2 0 3-1 4.500M11.500 6 13 7.500 11.500 9" /></svg>
        </button>
        <button type="button" aria-label="Snap add"><svg viewBox="0 0 10 10" className="size-[10px]" stroke="#28dfe2" strokeWidth="2"><path d="M0 5h10M5 0v10" /></svg></button>
        <button type="button" aria-label="Working plane" className="flex size-[14px] items-end bg-linear-to-b from-[#2fe0e4] to-[#14a9ae] pb-[2px] pl-[2px]"><span className="size-[5px] rounded-full border border-[#0c6e73]" /></button>
      </div>
      <div className={`${FIELD} ml-[10px] h-[21px] w-[82px] pr-[2px]`}>
        <select aria-label="Annotation scale" className={`${CHOICE} ml-[26px]`}><option>1:1</option></select>
        <Caret className="text-[#b5b5b5]" />
      </div>
      <div className={`${FIELD} ml-[25px] h-6 w-[82px] pr-[2px] pl-[2px]`}>
        <span className="size-3 shrink-0 border border-[#6f9bd6] bg-[#3b6db5]" />
        <select aria-label="Notifications" className={`${CHOICE} ml-[3px]`}><option>23</option></select>
        <Caret className="text-[#b5b5b5]" />
      </div>
      <div className={`${FIELD} ml-[6px] h-6 w-[82px] pr-[2px] pl-[19px]`}>
        <svg viewBox="0 0 10 13" className="h-[13px] w-[10px] shrink-0" fill="none" stroke="#d5d5d5" strokeWidth="1.3" aria-hidden="true"><rect x="1" y="1" width="8" height="11" rx="3.5" /><path d="M5 3v3" /></svg>
        <select aria-label="Navigation style" className={`${CHOICE} ml-[3px]`}><option>CAD</option></select>
        <Caret className="text-[#b5b5b5]" />
      </div>
      <div className={`${FIELD} ml-[6px] h-[21px] w-[113px] pr-[2px] pl-[3px] text-[10px]`}>
        <select aria-label="View size" className={CHOICE}><option>11.29 mm x 6.08 mm</option></select>
        <Caret className="text-[#b5b5b5]" />
      </div>
    </footer>
  );
}

export default function App() {
  return (
    <div className="flex h-screen flex-col overflow-hidden bg-[#333]">
      <TitleBar />
      <MenuBar />
      <ToolBar />
      <div className="flex min-h-0 flex-1">
        <SidePanel />
        <Workspace />
      </div>
      <StatusBar />
    </div>
  );
}
